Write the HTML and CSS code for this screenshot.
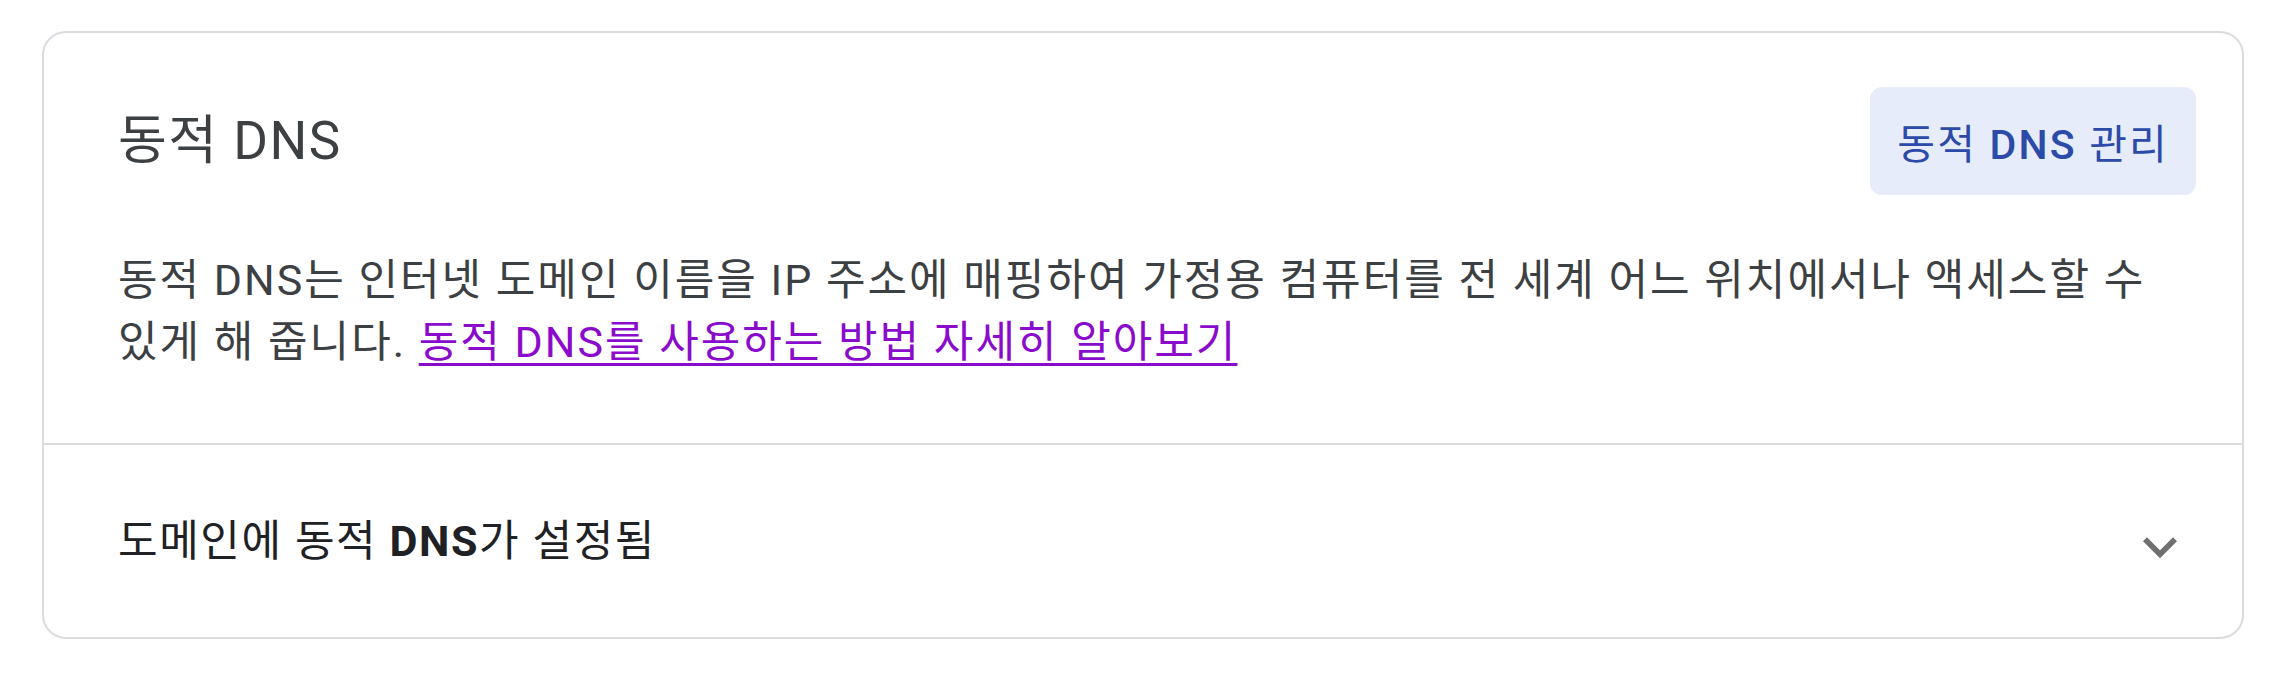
FILE: index.html
```html
<!DOCTYPE html>
<html lang="ko">
<head>
<meta charset="utf-8">
<title>동적 DNS</title>
<link rel="stylesheet" href="styles.css">
</head>
<body>
<section class="card">
  <div class="top">
    <div class="head-row">
      <h2 class="title">동적 DNS</h2>
      <button class="tonal-btn" type="button">동적 <span class="btn-latin">DNS</span> 관리</button>
    </div>
    <p class="desc">동적 DNS는 인터넷 도메인 이름을 IP 주소에 매핑하여 가정용 컴퓨터를 전 세계 어느 위치에서나 액세스할 수 있게 해 줍니다. <a class="link" href="#">동적 DNS를 사용하는 방법 자세히 알아보기</a></p>
  </div>
  <div class="row">
    <span class="row-label">도메인에 동적 <strong class="strong">DNS</strong>가 설정됨</span>
    <svg class="chev" viewBox="0 0 24 24" aria-hidden="true"><path d="M16.59 8.59L12 13.17 7.41 8.59 6 10l6 6 6-6z"/></svg>
  </div>
</section>
</body>
</html>
```
FILE: styles.css
```css
html, body {
  margin: 0;
  padding: 0;
  background: #ffffff;
}
body {
  font-family: Roboto, "Noto Sans CJK KR", sans-serif;
  padding: 31px 0 0 42px;
}
.card {
  box-sizing: border-box;
  width: 2202px;
  border: 2px solid #dadce0;
  border-radius: 24px;
  background: #fff;
}
.top {
  padding: 54px 46px 70px 74px;
  border-bottom: 2px solid #dadce0;
}
.head-row {
  display: flex;
  align-items: center;
  justify-content: space-between;
  height: 108px;
}
.title {
  margin: 0;
  font-size: 53px;
  font-weight: 400;
  letter-spacing: 1.5px;
  color: #3c4043;
  line-height: 64px;
}
.tonal-btn {
  height: 108px;
  padding: 0 27px;
  border: 0;
  border-radius: 12px;
  background: #e6ecf9;
  color: #2c4aa8;
  font-family: Roboto, "Noto Sans CJK KR", sans-serif;
  font-size: 41px;
  font-weight: 400;
  letter-spacing: 2.2px;
}
.btn-latin {
  font-weight: 500;
}
.desc {
  margin: 54px 0 0 0;
  font-size: 43px;
  letter-spacing: 2px;
  line-height: 62px;
  color: #3c4043;
  word-break: keep-all;
}
.link {
  color: #8a0bcb;
  text-decoration: underline;
  text-decoration-thickness: 3px;
  text-underline-offset: 6px;
}
.row {
  display: flex;
  align-items: center;
  justify-content: space-between;
  height: 192px;
  padding: 0 48px 0 74px;
}
.row-label {
  margin-bottom: 8px;
  font-size: 43px;
  letter-spacing: 1.6px;
  color: #202124;
}
.strong {
  font-weight: 700;
}
.chev {
  width: 68px;
  height: 68px;
  margin-top: 12px;
  fill: #707070;
}
```
